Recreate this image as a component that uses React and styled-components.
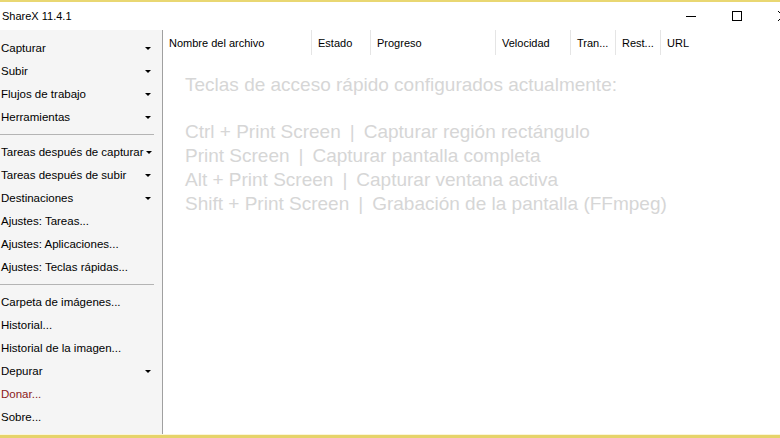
import styled, { createGlobalStyle } from 'styled-components';

const GlobalStyle = createGlobalStyle`
  html, body {
    margin: 0;
    padding: 0;
    background: #ffffff;
    overflow: hidden;
  }
`;

const menuGroups = [
  [
    { label: 'Capturar', arrow: true },
    { label: 'Subir', arrow: true },
    { label: 'Flujos de trabajo', arrow: true },
    { label: 'Herramientas', arrow: true },
  ],
  [
    { label: 'Tareas después de capturar', arrow: true },
    { label: 'Tareas después de subir', arrow: true },
    { label: 'Destinaciones', arrow: true },
    { label: 'Ajustes: Tareas...' },
    { label: 'Ajustes: Aplicaciones...' },
    { label: 'Ajustes: Teclas rápidas...' },
  ],
  [
    { label: 'Carpeta de imágenes...' },
    { label: 'Historial...' },
    { label: 'Historial de la imagen...' },
    { label: 'Depurar', arrow: true },
    { label: 'Donar...', red: true },
    { label: 'Sobre...' },
  ],
];

const columns = [
  { label: 'Nombre del archivo', width: 149 },
  { label: 'Estado', width: 59 },
  { label: 'Progreso', width: 125 },
  { label: 'Velocidad', width: 75 },
  { label: 'Tran...', width: 45 },
  { label: 'Rest...', width: 45 },
  { label: 'URL', width: 118 },
];

const hotkeys = [
  ['Ctrl + Print Screen', 'Capturar región rectángulo'],
  ['Print Screen', 'Capturar pantalla completa'],
  ['Alt + Print Screen', 'Capturar ventana activa'],
  ['Shift + Print Screen', 'Grabación de la pantalla (FFmpeg)'],
];

export default function App() {
  return (
    <>
      <GlobalStyle />
      <Window>
        <TitleBar>
          <Title>ShareX 11.4.1</Title>
          <Controls>
            <ControlButton aria-label="Minimizar">
              <svg width="10" height="10" viewBox="0 0 10 10">
                <path d="M0 5.5h10" stroke="#000" strokeWidth="1" />
              </svg>
            </ControlButton>
            <ControlButton aria-label="Maximizar">
              <svg width="10" height="10" viewBox="0 0 10 10">
                <rect x="0.5" y="0.5" width="9" height="9" fill="none" stroke="#000" />
              </svg>
            </ControlButton>
            <ControlButton aria-label="Cerrar">
              <svg width="10" height="10" viewBox="0 0 10 10">
                <path d="M0 0L10 10M10 0L0 10" stroke="#000" strokeWidth="1" />
              </svg>
            </ControlButton>
          </Controls>
        </TitleBar>
        <Main>
          <Sidebar>
            {menuGroups.map((group, gi) => (
              <MenuGroup key={gi}>
                {gi > 0 && <Separator />}
                {group.map(item => (
                  <MenuItem key={item.label} $red={item.red}>
                    <span>{item.label}</span>
                    {item.arrow && <Arrow />}
                  </MenuItem>
                ))}
              </MenuGroup>
            ))}
          </Sidebar>
          <Content>
            <Header>
              {columns.map(col => (
                <HeaderCell key={col.label} $width={col.width}>
                  {col.label}
                </HeaderCell>
              ))}
            </Header>
            <Hints>
              <HintTitle>Teclas de acceso rápido configurados actualmente:</HintTitle>
              <HintList>
                {hotkeys.map(([key, action]) => (
                  <HintLine key={key}>
                    {key}
                    <Pipe>|</Pipe>
                    {action}
                  </HintLine>
                ))}
              </HintList>
            </Hints>
          </Content>
        </Main>
      </Window>
    </>
  );
}

const Window = styled.div`
  width: 780px;
  height: 438px;
  box-sizing: border-box;
  display: flex;
  flex-direction: column;
  border-top: 2px solid #e9d772;
  border-bottom: 3px solid #e6d36a;
  font-family: 'Liberation Sans', Arial, sans-serif;
  font-size: 11.5px;
  color: #000;
  background: #fff;
`;

const TitleBar = styled.div`
  height: 28px;
  display: flex;
  align-items: center;
  justify-content: space-between;
  background: #fff;
`;

const Title = styled.div`
  padding-left: 2px;
  font-size: 11px;
`;

const Controls = styled.div`
  display: flex;
  align-items: center;
  margin-right: -26px;
`;

const ControlButton = styled.div`
  width: 46px;
  height: 28px;
  display: flex;
  align-items: center;
  justify-content: center;
`;

const Main = styled.div`
  flex: 1;
  display: flex;
  min-height: 0;
  border-bottom: 1px solid #fbf6d8;
`;

const Sidebar = styled.div`
  width: 163px;
  flex-shrink: 0;
  background: #f5f5f5;
  border-right: 1px solid #a0a0a0;
  padding-top: 6px;
  box-sizing: border-box;
`;

const MenuGroup = styled.div`
  display: flex;
  flex-direction: column;
`;

const Separator = styled.div`
  height: 12px;
  display: flex;
  align-items: center;
  padding-right: 8px;
  &::after {
    content: '';
    flex: 1;
    height: 1px;
    background: #b4b4b4;
  }
`;

const MenuItem = styled.div`
  height: 23px;
  display: flex;
  align-items: center;
  justify-content: space-between;
  gap: 2px;
  padding: 0 11px 0 1px;
  color: ${p => (p.$red ? '#8b1a1a' : '#000')};
  white-space: nowrap;
`;

const Arrow = styled.span`
  width: 0;
  height: 0;
  flex-shrink: 0;
  border-left: 3px solid transparent;
  border-right: 3px solid transparent;
  border-top: 3px solid #000;
  margin-top: 2px;
`;

const Content = styled.div`
  flex: 1;
  display: flex;
  flex-direction: column;
  background: #fff;
`;

const Header = styled.div`
  height: 25px;
  display: flex;
  align-items: stretch;
  font-size: 11px;
`;

const HeaderCell = styled.div`
  width: ${p => p.$width}px;
  flex-shrink: 0;
  box-sizing: border-box;
  padding: 0 6px;
  display: flex;
  align-items: center;
  border-right: 1px solid #e5e5e5;
  white-space: nowrap;
  overflow: hidden;
  &:last-child {
    border-right: none;
  }
`;

const Hints = styled.div`
  padding: 18px 0 0 22px;
  color: #d6d6d6;
  font-size: 19px;
`;

const HintTitle = styled.div`
  line-height: 24px;
`;

const HintList = styled.div`
  margin-top: 23px;
`;

const HintLine = styled.div`
  line-height: 24px;
  white-space: nowrap;
`;

const Pipe = styled.span`
  margin: 0 9px;
`;
